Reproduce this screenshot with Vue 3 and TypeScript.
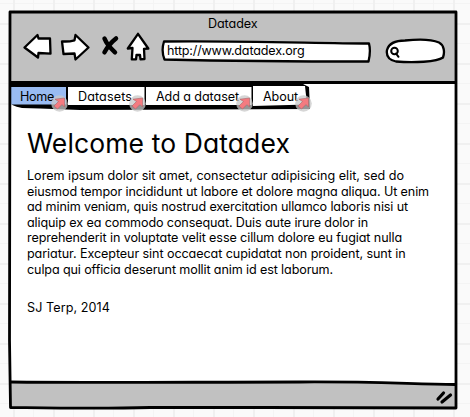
<script setup lang="ts">
import type { Directive } from 'vue'

interface Line { text: string; width: number }
interface Tab extends Line { id: string }

// Spreads the letters of a label so that it fills the given width.
const vFit: Directive<HTMLElement, number> = {
  mounted(el, { value }) {
    const count = (el.textContent ?? '').length
    const natural = el.getBoundingClientRect().width
    el.style.letterSpacing = `${(value - natural) / count}px`
  },
}

const tabs: Tab[] = [
  { id: 'home', text: 'Home', width: 34 },
  { id: 'datasets', text: 'Datasets', width: 54 },
  { id: 'add', text: 'Add a dataset', width: 83 },
  { id: 'about', text: 'About', width: 35 },
]

const lines: Line[] = [
  { text: 'Lorem ipsum dolor sit amet, consectetur adipisicing elit, sed do', width: 377 },
  { text: 'eiusmod tempor incididunt ut labore et dolore magna aliqua. Ut enim', width: 402 },
  { text: 'ad minim veniam, quis nostrud exercitation ullamco laboris nisi ut', width: 381 },
  { text: 'aliquip ex ea commodo consequat. Duis aute irure dolor in', width: 341 },
  { text: 'reprehenderit in voluptate velit esse cillum dolore eu fugiat nulla', width: 375 },
  { text: 'pariatur. Excepteur sint occaecat cupidatat non proident, sunt in', width: 378.5 },
  { text: 'culpa qui officia deserunt mollit anim id est laborum.', width: 306 },
]
</script>

<template>
  <main class="canvas">
    <section class="window">
      <header class="chrome">
        <div class="title"><span v-fit="49.5">Datadex</span></div>
        <div class="toolbar">
          <svg class="icons" width="130" height="34" viewBox="22 30 130 34">
            <g class="ink white">
              <path d="M24.500 47.500 37.500 35 38.500 38.500 50 38.500 50.500 53.700 38.500 53 38 57.500Z" />
              <path d="M62 41.300Q68 42 74.500 40.300L75.500 35 88.500 47.500 75.500 59.500 74.500 53.500 63.500 54Z" />
              <path d="M138 33.800 127.800 48.500 132.500 48 131.800 59.300 136 59.300 136.500 55 140 55 140.500 59.300 144.500 59 144 48.800 148.300 48.500Z" />
            </g>
            <path class="cross" d="M104.500 38.500Q107 45 115 52.300M116 38.500Q109 44 104.500 52.300" />
          </svg>
          <div class="field">
            <svg class="shape" width="212" height="26" viewBox="160 38 212 26"><path class="ink white" d="M164 41.500C230 40.500 310 43 369 43.500Q371 51 368.500 61.500C310 61.500 230 61 164.500 59.500Q161 51 164 41.500Z" /></svg>
            <span v-fit="137.5" class="url">http://www.datadex.org</span>
          </div>
          <svg class="search" width="64" height="28" viewBox="384 37 64 28">
            <path class="ink white" d="M387 50C389 43 396 40.500 405 40.500 418 39 432 39.500 439 42.500 444 45 445 52 443 57.500 437 62 413 63 396 61.500 389 60 386 56 387 50Z" />
            <circle class="ink white lens" cx="394.500" cy="51" r="3.300" /><path class="ink lens" d="m396 53.500 2.500 3.300" />
          </svg>
        </div>
      </header>
      <nav class="tabs">
        <svg class="shape" width="302" height="28" viewBox="8 84 302 28">
          <path fill="#000" d="M9 84H303L309 87 310 109 200 109.500 80 110 40 108.500 22 108Q10 106 9.500 101Z" />
          <path fill="#99bbf2" d="M9.500 87H66V104.500H11Z" />
          <path fill="#fff" d="M68 87H144.500V105H68ZM146 87H251.500V105H146ZM253 86H305L307 104.500 253 106Z" />
        </svg>
        <a v-for="tab in tabs" :key="tab.id" :class="['tab', tab.id]">
          <span v-fit="tab.width">{{ tab.text }}</span>
          <svg class="badge" width="17" height="17" viewBox="0 0 17 17"><circle cx="8.500" cy="8.500" r="8.300" /><path d="M4 4.200 13.500 3V12L11 9.500 6.500 14 3 11 7.500 6.500Z" /></svg>
        </a>
      </nav>
      <article class="page">
        <h1><span v-fit="263">Welcome to Datadex</span></h1>
        <p><span v-for="line in lines" :key="line.text" class="line"><span v-fit="line.width">{{ line.text }}</span></span></p>
        <p class="author"><span v-fit="83">SJ Terp, 2014</span></p>
      </article>
      <svg class="frame" width="470" height="417" viewBox="0 0 470 417">
        <path class="status" d="M11 382C80 383 200 382 300 382 370 381.500 410 384 455 384.500V408H11Z" />
        <g class="edge">
          <path d="M10 12H456V408C390 407.500 250 407.500 150 407.500 100 409 50 408 10.500 407.500L9.500 340Z" />
          <path d="M10 82.500H456M11 382C80 383 200 382 300 382 370 381.500 410 384 455 384.500" />
        </g>
        <path class="grip" d="m438 399 5.500-6M442 402 450.500 395" />
      </svg>
    </section>
  </main>
</template>

<style>
body { margin: 0; }
</style>

<style scoped>
.canvas {
  box-sizing: border-box;
  width: 470px;
  height: 417px;
  padding: 11px 0 0 9px;
  overflow: hidden;
  position: relative;
  color: #000;
  font: 420 12.6px/16px Inter, "Noto Sans", sans-serif;
  font-feature-settings: "cv11";
  background-color: #fafafa;
  background-image:
    linear-gradient(90deg, #f0f0f0 2px, transparent 2px 20px, #f4f4f4 20px 21px, transparent 21px),
    linear-gradient(#f0f0f0 2px, transparent 2px 20px, #f4f4f4 20px 21px, transparent 21px);
  background-size: 40px 40px;
  background-position: 13px 0, 0 23px;
}
span { white-space: nowrap; display: inline-block; }
.window { width: 448px; height: 397px; background: #fff; }
.chrome { height: 73px; background: #c1c1c1; }
.title { padding: 5px 0 0 199px; height: 16px; }
.toolbar { display: flex; align-items: flex-start; padding-left: 13px; }
.icons { margin: -2px 8px 0 0; }
.field { position: relative; width: 212px; height: 26px; margin: 6px 12px 0 0; }
.shape { position: absolute; left: 0; top: 0; }
.url { position: relative; margin: 5px 0 0 7px; }
.search { margin-top: 5px; }
.ink { stroke: #000; stroke-width: 2.3; stroke-linejoin: round; stroke-linecap: round; }
.white { fill: #fff; }
.lens { stroke-width: 2; }
.cross { stroke: #000; stroke-width: 4.5; stroke-linecap: round; fill: none; }
.tabs { position: relative; display: flex; width: 301px; height: 27px; }
.tabs .shape { left: -1px; }
.tab { position: relative; box-sizing: border-box; height: 27px; padding: 5px 0 0 11px; }
.home { width: 58px; }
.datasets { width: 78px; }
.add { width: 107px; }
.about { width: 57px; }
.badge { position: absolute; right: -1px; top: 11px; }
.about .badge { right: -3px; }
.badge circle { fill: #c8c8c8; fill-opacity: .75; }
.badge path { fill: #f47b80; stroke: #a86468; stroke-width: .6; }
.page { padding: 16px 0 0 18px; }
h1 { margin: 0; font-weight: 420; font-size: 26.5px; line-height: 32px; }
p { margin: 9px 0 0; }
.line { display: block; height: 15.6px; line-height: 15.6px; }
.line > span { line-height: 15.6px; }
.author { margin-top: 23px; }
.frame { position: absolute; left: 0; top: 0; pointer-events: none; }
.status { fill: #c1c1c1; }
.edge { fill: none; stroke: #000; stroke-width: 2.8; stroke-linejoin: round; }
.grip { fill: none; stroke: #000; stroke-width: 3.2; stroke-linecap: round; }
</style>
